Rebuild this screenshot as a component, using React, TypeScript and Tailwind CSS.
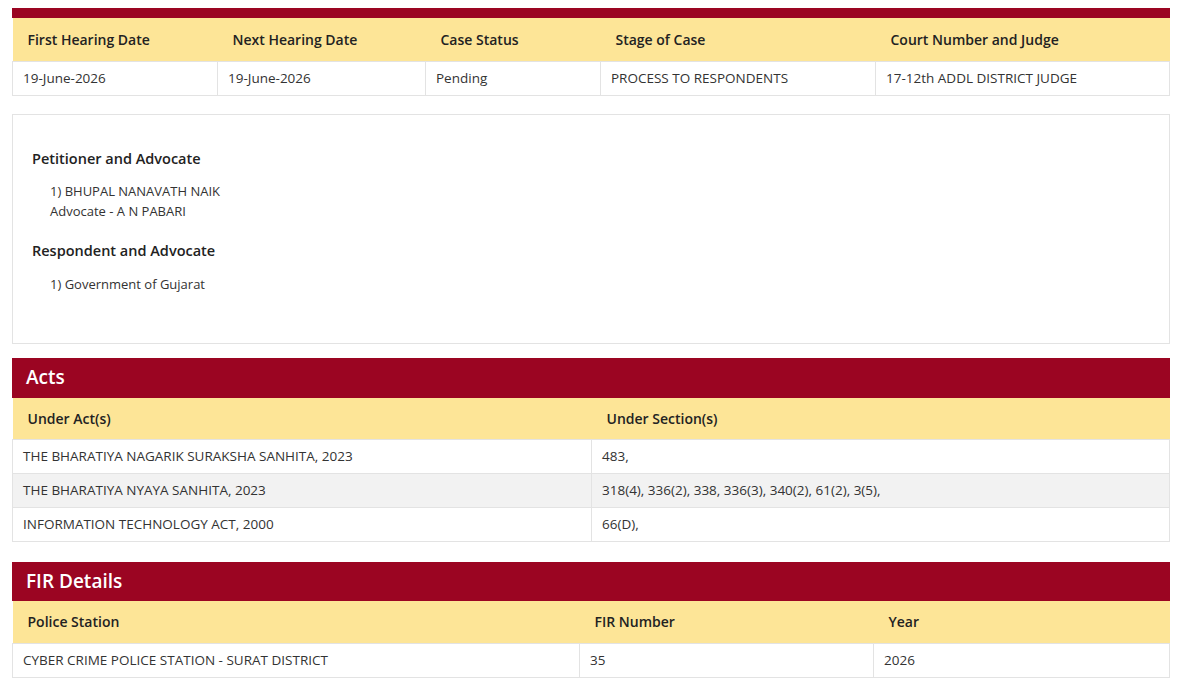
export default function App() {
  const f = { fontFamily: '"Open Sans", sans-serif' };
  const th = "px-[15px] text-left font-semibold text-[14px] text-[#222] h-[42px] align-middle";
  const td = "px-[10px] text-[13.5px] text-[#333] h-[34px] align-middle border border-[#e3e3e3]";
  return (
    <div style={f} className="w-[1200px] h-[696px] overflow-hidden bg-white pt-[8px]">
      <div className="ml-[12px] w-[1158px]">
        <div className="h-[10px] bg-[#9b0522]" />
        <table className="w-full border-collapse table-fixed">
          <colgroup><col className="w-[205px]" /><col className="w-[208px]" /><col className="w-[175px]" /><col className="w-[275px]" /><col /></colgroup>
          <thead><tr className="bg-[#fde597]">
            <th className={th + " h-[43px]"}>First Hearing Date</th><th className={th}>Next Hearing Date</th><th className={th}>Case Status</th><th className={th}>Stage of Case</th><th className={th}>Court Number and Judge</th>
          </tr></thead>
          <tbody><tr>
            <td className={td}>19-June-2026</td><td className={td}>19-June-2026</td><td className={td}>Pending</td><td className={td}>PROCESS TO RESPONDENTS</td><td className={td}>17-12th ADDL DISTRICT JUDGE</td>
          </tr></tbody>
        </table>
        <div className="mt-[18px] h-[230px] border border-[#e3e3e3] pt-[33px] pl-[19px] text-[#222]">
          <div className="font-semibold text-[14.5px]">Petitioner and Advocate</div>
          <div className="pl-[18px] mt-[12px] text-[13px] text-[#333] leading-[20px]">
            <div>1) BHUPAL NANAVATH NAIK</div><div>Advocate - A N PABARI</div>
          </div>
          <div className="font-semibold text-[14.5px] mt-[19px]">Respondent and Advocate</div>
          <div className="pl-[18px] mt-[12px] text-[13px] text-[#333] leading-[20px]">1) Government of Gujarat</div>
        </div>
        <div className="mt-[14px] h-[40px] bg-[#9b0522] text-white text-[19px] font-semibold pl-[14px] flex items-center">Acts</div>
        <table className="w-full border-collapse table-fixed">
          <colgroup><col className="w-[579px]" /><col /></colgroup>
          <thead><tr className="bg-[#fde597]"><th className={th}>Under Act(s)</th><th className={th}>Under Section(s)</th></tr></thead>
          <tbody>
            <tr><td className={td}>THE BHARATIYA NAGARIK SURAKSHA SANHITA, 2023</td><td className={td}>483,</td></tr>
            <tr className="bg-[#f2f2f2]"><td className={td}>THE BHARATIYA NYAYA SANHITA, 2023</td><td className={td}>318(4), 336(2), 338, 336(3), 340(2), 61(2), 3(5),</td></tr>
            <tr><td className={td}>INFORMATION TECHNOLOGY ACT, 2000</td><td className={td}>66(D),</td></tr>
          </tbody>
        </table>
        <div className="mt-[20px] h-[39px] bg-[#9b0522] text-white text-[19px] font-semibold pl-[14px] flex items-center">FIR Details</div>
        <table className="w-full border-collapse table-fixed">
          <colgroup><col className="w-[567px]" /><col className="w-[294px]" /><col /></colgroup>
          <thead><tr className="bg-[#fde597]"><th className={th}>Police Station</th><th className={th}>FIR Number</th><th className={th}>Year</th></tr></thead>
          <tbody><tr><td className={td}>CYBER CRIME POLICE STATION - SURAT DISTRICT</td><td className={td}>35</td><td className={td}>2026</td></tr></tbody>
        </table>
        <div className="mt-[18px] h-[2px] bg-[#7a1030]" />
      </div>
    </div>
  );
}
